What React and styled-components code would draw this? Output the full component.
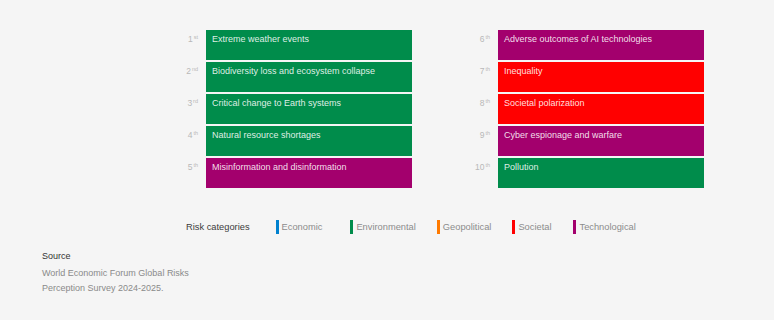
import React from "react";
import styled, { createGlobalStyle } from "styled-components";

const Global = createGlobalStyle`
  html, body { margin: 0; padding: 0; background: #f5f5f5; }
  body { font-family: "Liberation Sans", Arial, sans-serif; }
`;

const COLORS = {
  economic: "#0081cf",
  environmental: "#008c4b",
  geopolitical: "#ff7a00",
  societal: "#ff0000",
  technological: "#a3006d",
};

const Page = styled.div`
  width: 774px;
  height: 320px;
  box-sizing: border-box;
  padding: 30px 0 0 42px;
`;

const Chart = styled.div`
  display: grid;
  grid-template-columns: 236px 236px;
  column-gap: 56px;
  margin-left: 134px;
`;

const Column = styled.div`
  display: flex;
  flex-direction: column;
  gap: 2px;
`;

const Row = styled.div`
  display: flex;
  align-items: flex-start;
`;

const Rank = styled.div`
  width: 30px;
  box-sizing: border-box;
  padding-right: 8px;
  padding-top: 3px;
  text-align: right;
  font-size: 8.5px;
  line-height: 12px;
  color: #b8b8b8;
  sup {
    font-size: 5.5px;
    vertical-align: 3px;
    line-height: 0;
    margin-left: 1px;
  }
`;

const Box = styled.div`
  width: 206px;
  height: 30px;
  box-sizing: border-box;
  padding: 3px 6px 0 6px;
  background: ${(p) => p.$color};
  color: rgba(255, 255, 255, 0.88);
  font-size: 9px;
  line-height: 12px;
`;

const Legend = styled.div`
  display: flex;
  align-items: center;
  margin: 32px 0 0 144px;
  height: 14px;
  font-size: 9.3px;
`;

const LegendLabel = styled.span`
  color: #3c3c3c;
  margin-right: 26px;
`;

const LegendItem = styled.div`
  display: flex;
  align-items: center;
  margin-right: ${(p) => p.$space}px;
  color: #8c8c8c;
`;

const Swatch = styled.span`
  display: inline-block;
  width: 3px;
  height: 14px;
  background: ${(p) => p.$color};
  margin-right: 3px;
`;

const Source = styled.div`
  margin-top: 15px;
  font-size: 9px;
  line-height: 15px;
`;

const SourceTitle = styled.div`
  color: #333;
  margin-bottom: 2px;
`;

const SourceText = styled.div`
  color: #8a8a8a;
  width: 170px;
`;

const left = [
  ["1", "st", "Extreme weather events", "environmental"],
  ["2", "nd", "Biodiversity loss and ecosystem collapse", "environmental"],
  ["3", "rd", "Critical change to Earth systems", "environmental"],
  ["4", "th", "Natural resource shortages", "environmental"],
  ["5", "th", "Misinformation and disinformation", "technological"],
];
const right = [
  ["6", "th", "Adverse outcomes of AI technologies", "technological"],
  ["7", "th", "Inequality", "societal"],
  ["8", "th", "Societal polarization", "societal"],
  ["9", "th", "Cyber espionage and warfare", "technological"],
  ["10", "th", "Pollution", "environmental"],
];

const legend = [
  ["Economic", "economic", 28],
  ["Environmental", "environmental", 21],
  ["Geopolitical", "geopolitical", 21],
  ["Societal", "societal", 22],
  ["Technological", "technological", 0],
];

function Col({ items }) {
  return (
    <Column>
      {items.map(([n, s, t, c]) => (
        <Row key={n}>
          <Rank>
            {n}
            <sup>{s}</sup>
          </Rank>
          <Box $color={COLORS[c]}>{t}</Box>
        </Row>
      ))}
    </Column>
  );
}

export default function App() {
  return (
    <>
      <Global />
      <Page>
        <Chart>
          <Col items={left} />
          <Col items={right} />
        </Chart>
        <Legend>
          <LegendLabel>Risk categories</LegendLabel>
          {legend.map(([l, c, sp]) => (
            <LegendItem key={l} $space={sp}>
              <Swatch $color={COLORS[c]} />
              {l}
            </LegendItem>
          ))}
        </Legend>
        <Source>
          <SourceTitle>Source</SourceTitle>
          <SourceText>
            World Economic Forum Global Risks Perception Survey 2024-2025.
          </SourceText>
        </Source>
      </Page>
    </>
  );
}
